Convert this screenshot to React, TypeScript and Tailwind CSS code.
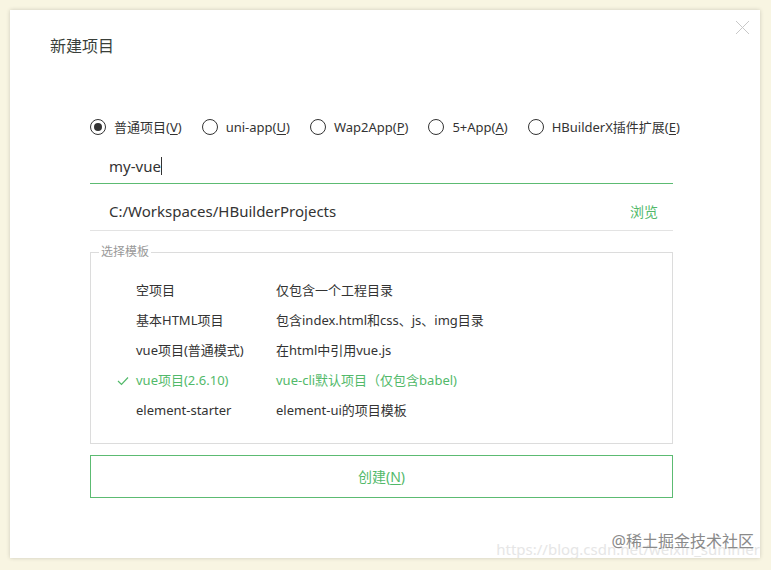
import React from "react";

const FONT = { fontFamily: '"Noto Sans", "Noto Sans CJK SC", sans-serif' };

function Radio({ label, acc, checked }: { label: string; acc: string; checked?: boolean }) {
  return (
    <div className="flex items-center gap-[8px] shrink-0 whitespace-nowrap">
      <span className="w-[16px] h-[16px] shrink-0 rounded-full border border-[#333] flex items-center justify-center">
        {checked && <span className="w-[8px] h-[8px] rounded-full bg-[#333]" />}
      </span>
      <span className="text-[13px] text-[#333] leading-[20px]">
        {label}(<span className="underline underline-offset-2">{acc}</span>)
      </span>
    </div>
  );
}

const rows = [
  ["空项目", "仅包含一个工程目录"],
  ["基本HTML项目", "包含index.html和css、js、img目录"],
  ["vue项目(普通模式)", "在html中引用vue.js"],
  ["vue项目(2.6.10)", "vue-cli默认项目（仅包含babel)"],
  ["element-starter", "element-ui的项目模板"],
];

export default function App() {
  return (
    <div className="w-[771px] h-[570px] bg-[#f8f5e2] pt-[10px] pl-[10px]" style={FONT}>
      <div className="relative w-[750px] h-[548px] bg-white shadow-[0_0_4px_rgba(0,0,0,0.18)] overflow-hidden">
        <div className="pt-[24px] pl-[40px] text-[16px] leading-[24px] text-[#3a3f3a]">新建项目</div>
        <svg className="absolute top-[10px] right-[10px]" width="15" height="15" viewBox="0 0 15 15">
          <path d="M1 1 L14 14 M14 1 L1 14" stroke="#c8c8c8" strokeWidth="1" fill="none" />
        </svg>
        <div className="ml-[80px] w-[583px] mt-[59px]">
          <div className="h-[20px] flex items-center gap-[20px]">
            <Radio label="普通项目" acc="V" checked />
            <Radio label="uni-app" acc="U" />
            <Radio label="Wap2App" acc="P" />
            <Radio label="5+App" acc="A" />
            <Radio label="HBuilderX插件扩展" acc="E" />
          </div>
          <div className="mt-[10px] h-[37px] pt-[2px] border-b border-[#5cbb72] flex items-center pl-[19px] text-[15px] text-[#333]">
            my-vue<span className="inline-block w-[1px] h-[18px] bg-[#333]" />
          </div>
          <div className="h-[47px] pt-[9px] border-b border-[#e3e3e3] flex items-center justify-between pl-[19px] pr-[15px]">
            <span className="text-[15px] text-[#333]">C:/Workspaces/HBuilderProjects</span>
            <span className="text-[14px] text-[#52b96a]">浏览</span>
          </div>
          <fieldset className="mt-[13px] h-[200px] border border-[#dcdcdc]">
            <legend className="ml-[8px] px-[2px] text-[12px] leading-[16px] text-[#999]">选择模板</legend>
            <div className="pt-[16px]">
              {rows.map(([a, b], i) => {
                const sel = i === 3;
                return (
                  <div key={a} className={"flex items-center h-[30px] text-[13px] " + (sel ? "text-[#52b96a]" : "text-[#333]")}>
                    <span className="w-[45px] flex justify-end pr-[7px]">
                      {sel && (
                        <svg width="12" height="10" viewBox="0 0 12 10">
                          <path d="M1 5 L4.5 8.5 L11 1.5" stroke="#52b96a" strokeWidth="1.2" fill="none" />
                        </svg>
                      )}
                    </span>
                    <span className="w-[140px]">{a}</span>
                    <span>{b}</span>
                  </div>
                );
              })}
            </div>
          </fieldset>
          <div className="mt-[11px] h-[43px] border border-[#5cbb72] flex items-center justify-center text-[14px] text-[#52b96a]">
            创建(<span className="underline underline-offset-2">N</span>)
          </div>
        </div>
        <div className="absolute right-[0px] bottom-[-2px] text-[15px] text-[#e6e6e6] whitespace-nowrap">https://blog.csdn.net/weixin_summer</div>
        <div className="absolute right-[6px] bottom-[5px] text-[16px] text-[#8a8a8a] whitespace-nowrap">@稀土掘金技术社区</div>
      </div>
    </div>
  );
}
